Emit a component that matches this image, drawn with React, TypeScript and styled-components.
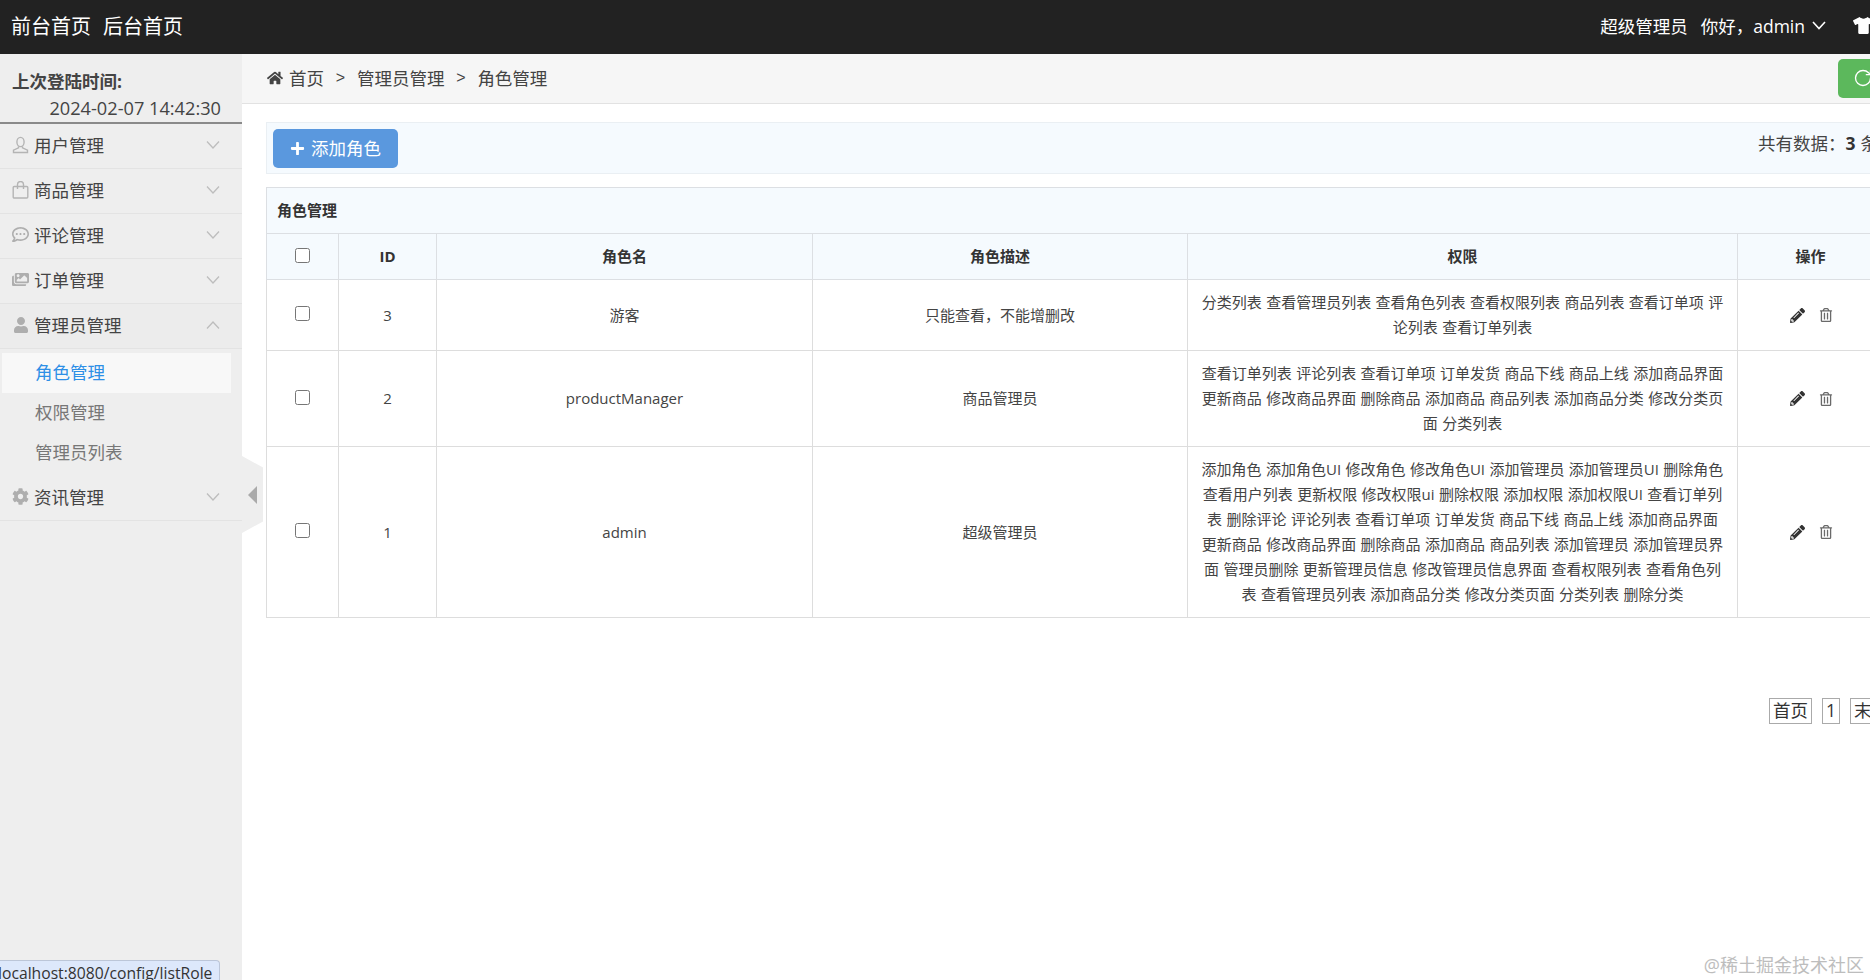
import React from "react";
import styled, { createGlobalStyle } from "styled-components";
import { RotateCw } from "lucide-react";
import { FaCog, FaHome, FaImages, FaPencilAlt, FaPlus, FaRegCommentDots, FaRegTrashAlt, FaTshirt, FaUser } from "react-icons/fa";

const FONT = `"Open Sans", "Noto Sans CJK SC", sans-serif`;

const Global = createGlobalStyle`
  html, body { margin: 0; padding: 0; width: 1870px; height: 980px; overflow: hidden; background: #fff; }
  body { font-family: ${FONT}; color: #333; }
  #root { width: 1870px; height: 980px; overflow: hidden; position: relative; }
`;

const Page = styled.div`
  width: 1907px;
  height: 980px;
  display: flex;
  flex-direction: column;
`;

const TopBar = styled.header`
  height: 54px;
  box-sizing: border-box;
  flex: none;
  background: #222;
  color: #fff;
  display: flex;
  align-items: center;
  padding: 0 0 3px 11px;
`;

const TopLink = styled.a`
  font-size: 20px;
  margin-right: 12px;
  color: #fff;
`;

const TopRight = styled.div`
  margin-left: auto;
  display: flex;
  align-items: center;
  font-size: 17.5px;
  padding-right: 33px;
`;

const Role = styled.span`
  margin-right: 13px;
`;

const Caret = styled.svg`
  width: 14px;
  height: 9px;
  margin-left: 7px;
  margin-right: 27px;
  fill: none;
  stroke: #fff;
  stroke-width: 1.6;
`;

const Body = styled.div`
  flex: 1;
  display: flex;
  min-height: 0;
`;

const Aside = styled.aside`
  width: 242px;
  flex: none;
  background: #eee;
  position: relative;
`;

const LoginInfo = styled.div`
  height: 70px;
  box-sizing: border-box;
  border-bottom: 2px solid #8a8a8a;
  font-size: 17.5px;
  padding: 14px 21px 0 12px;
`;

const LoginLabel = styled.div`
  font-weight: 700;
  line-height: 27px;
  color: #444;
`;

const LoginTime = styled.div`
  text-align: right;
  line-height: 26px;
  font-size: 18.2px;
  color: #444;
`;

const MenuRow = styled.div<{ $open?: boolean }>`
  height: 45px;
  box-sizing: border-box;
  border-bottom: 1px solid #e3e3e3;
  display: flex;
  align-items: center;
  padding: 0 22px 3px 12px;
  font-size: 17.5px;
  color: #444;
  background: ${(p) => (p.$open ? "#ececec" : "transparent")};
`;

const MenuIcon = styled.span`
  width: 17px;
  height: 18px;
  margin-right: 5px;
  color: #aeaeae;
  display: flex;
  align-items: center;
  justify-content: center;
  flex: none;
`;

const OutlineIcon = styled.svg`
  width: 17px;
  height: 18px;
  fill: none;
  stroke: #b4b4b4;
  stroke-width: 1.4;
`;

const Arrow = styled.svg`
  margin-left: auto;
  width: 14px;
  height: 8px;
  fill: none;
  stroke: #bdbdbd;
  stroke-width: 1.3;
`;

const SubMenu = styled.div`
  padding: 4px 0 3px;
`;

const SubItem = styled.div<{ $active?: boolean }>`
  height: 40px;
  width: 229px;
  margin-left: 2px;
  box-sizing: border-box;
  padding: 0 0 3px 33px;
  display: flex;
  align-items: center;
  font-size: 17.5px;
  color: ${(p) => (p.$active ? "#2e8fe6" : "#777")};
  background: ${(p) => (p.$active ? "#f8f8f8" : "transparent")};
`;

const Handle = styled.div`
  position: absolute;
  left: 242px;
  top: 402px;
  width: 21px;
  height: 77px;
  background: #eee;
  clip-path: polygon(0 0, 100% 15%, 100% 85%, 0 100%);
  display: flex;
  align-items: center;
  padding-left: 6px;
  box-sizing: border-box;
  &::before {
    content: "";
    border-style: solid;
    border-width: 9.5px 9px 9.5px 0;
    border-color: transparent #aaa transparent transparent;
  }
`;

const StatusBar = styled.div`
  position: absolute;
  left: -1px;
  bottom: 0;
  width: 221px;
  height: 20px;
  box-sizing: border-box;
  background: #dde8fb;
  border: 1px solid #bcc6d8;
  border-bottom: none;
  border-top-right-radius: 4px;
  font-size: 15.7px;
  line-height: 24px;
  color: #333;
  white-space: nowrap;
  overflow: hidden;
  text-indent: -2px;
`;

const Main = styled.main`
  flex: 1;
  min-width: 0;
`;

const Crumbs = styled.nav`
  height: 50px;
  box-sizing: border-box;
  background: #f6f6f6;
  border-bottom: 1px solid #e2e2e2;
  display: flex;
  align-items: center;
  padding: 0 0 3px 25px;
  font-size: 17.5px;
  color: #444;
`;

const Sep = styled.span`
  margin: 2px 11.8px 0;
  font-family: "Liberation Sans", sans-serif;
  font-size: 16px;
`;

const HomeIcon = styled(FaHome)`
  margin: 2px 6px 0 0;
  font-size: 16px;
`;

const RefreshBtn = styled.button`
  margin: 2px 20px 0 auto;
  width: 49px;
  height: 39px;
  border: none;
  border-radius: 5px;
  background: #5cb85c;
  color: #fff;
  display: flex;
  align-items: center;
  justify-content: center;
  padding: 0;
`;

const Content = styled.div`
  padding: 18px 0 0 24px;
  width: 1627px;
`;

const Toolbar = styled.div`
  width: 1617px;
  height: 52px;
  box-sizing: border-box;
  background: #f5fafe;
  border: 1px solid #eaeff3;
  display: flex;
  align-items: center;
  justify-content: space-between;
  padding: 0 4px 0 6px;
`;

const AddBtn = styled.button`
  width: 125px;
  height: 39px;
  background: #5a98de;
  color: #fff;
  border: none;
  border-radius: 5px;
  font: 17.5px ${FONT};
  display: flex;
  align-items: center;
  justify-content: center;
  gap: 6px;
  padding: 0 0 2px;
`;

const PlusIcon = styled(FaPlus)`
  font-size: 15px;
  margin-top: 2px;
`;

const Count = styled.div`
  font-size: 17.5px;
  color: #444;
  margin-top: -12px;
  strong { margin: 0 5px 0 0; color: #333; }
`;

const Table = styled.table`
  width: 1617px;
  margin-top: 13px;
  border-collapse: collapse;
  table-layout: fixed;
  font-size: 15px;
`;

const CaptionCell = styled.th`
  height: 46px;
  box-sizing: border-box;
  padding: 0 0 2px 10px;
  text-align: left;
  font-weight: 700;
  background: #f5fafe;
  border: 1px solid #dcdfe3;
`;

const HeadCell = styled.th`
  height: 46px;
  box-sizing: border-box;
  padding: 0 0 2px;
  text-align: center;
  font-weight: 700;
  background: #f5fafe;
  border: 1px solid #dcdfe3;
`;

const Cell = styled.td`
  padding: 0;
  text-align: center;
  vertical-align: middle;
  border: 1px solid #ddd;
  color: #444;
  line-height: 25px;
`;

const Perms = styled(Cell)`
  white-space: nowrap;
  word-spacing: 0.5px;
`;

const Check = styled.input<{ $head?: boolean }>`
  width: 15px;
  height: 15px;
  margin: 0 0 ${(p) => (p.$head ? 3 : 5)}px;
  vertical-align: middle;
  display: inline-block;
`;

const Ops = styled.div`
  display: flex;
  align-items: center;
  justify-content: center;
  gap: 14px;
  color: #333;
  padding-left: 1px;
`;

const TrashIcon = styled(FaRegTrashAlt)`
  color: #6a6a6a;
  font-size: 14px;
`;

const Pager = styled.div`
  display: flex;
  justify-content: flex-end;
  gap: 10px;
  margin-top: 80px;
`;

const PageBtn = styled.a`
  height: 26px;
  box-sizing: border-box;
  border: 1px solid #aaa;
  padding: 0 3px;
  font-size: 17.5px;
  line-height: 22px;
  color: #333;
`;

const Watermark = styled.div`
  position: absolute;
  right: 6px;
  bottom: 3px;
  font-size: 18px;
  line-height: 24px;
  color: #bdbdbd;
`;

const widths = [72, 98, 376, 375, 550, 146];

const UserOutline = () => (
  <OutlineIcon viewBox="0 0 17 18">
    <ellipse cx="8.5" cy="6" rx="3.6" ry="4.6" />
    <path d="M6.5 10.5v1.3L1.5 14.2v2.3h14v-2.3l-5-2.4v-1.3" />
  </OutlineIcon>
);

const BagOutline = () => (
  <OutlineIcon viewBox="0 0 17 18">
    <rect x="1.2" y="5.5" width="14.6" height="11.5" rx="1" />
    <path d="M5.5 8V3.5a3 3 0 0 1 6 0V8" />
  </OutlineIcon>
);

const menus = [
  { icon: <UserOutline />, label: "用户管理" },
  { icon: <BagOutline />, label: "商品管理" },
  { icon: <FaRegCommentDots size={17} />, label: "评论管理" },
  { icon: <FaImages size={19} />, label: "订单管理" },
];

const rows = [
  {
    id: 3, name: "游客", desc: "只能查看，不能增删改", h: 71,
    perms: ["分类列表 查看管理员列表 查看角色列表 查看权限列表 商品列表 查看订单项 评", "论列表 查看订单列表"],
  },
  {
    id: 2, name: "productManager", desc: "商品管理员", h: 96,
    perms: ["查看订单列表 评论列表 查看订单项 订单发货 商品下线 商品上线 添加商品界面", "更新商品 修改商品界面 删除商品 添加商品 商品列表 添加商品分类 修改分类页", "面 分类列表"],
  },
  {
    id: 1, name: "admin", desc: "超级管理员", h: 171,
    perms: [
      "添加角色 添加角色UI 修改角色 修改角色UI 添加管理员 添加管理员UI 删除角色",
      "查看用户列表 更新权限 修改权限ui 删除权限 添加权限 添加权限UI 查看订单列",
      "表 删除评论 评论列表 查看订单项 订单发货 商品下线 商品上线 添加商品界面",
      "更新商品 修改商品界面 删除商品 添加商品 商品列表 添加管理员 添加管理员界",
      "面 管理员删除 更新管理员信息 修改管理员信息界面 查看权限列表 查看角色列",
      "表 查看管理员列表 添加商品分类 修改分类页面 分类列表 删除分类",
    ],
  },
];

const Chevron = ({ up }: { up?: boolean }) => (
  <Arrow viewBox="0 0 14 8">
    <polyline points={up ? "1,7.5 7,1 13,7.5" : "1,0.5 7,7 13,0.5"} />
  </Arrow>
);

export default function App() {
  return (
    <Page>
      <Global />
      <TopBar>
        <TopLink>前台首页</TopLink>
        <TopLink>后台首页</TopLink>
        <TopRight>
          <Role>超级管理员</Role>
          <span>你好，admin</span>
          <Caret viewBox="0 0 14 9"><polyline points="1,1 7,7.5 13,1" /></Caret>
          <FaTshirt size={21} />
        </TopRight>
      </TopBar>
      <Body>
        <Aside>
          <LoginInfo>
            <LoginLabel>上次登陆时间:</LoginLabel>
            <LoginTime>2024-02-07 14:42:30</LoginTime>
          </LoginInfo>
          {menus.map((m) => (
            <MenuRow key={m.label}>
              <MenuIcon>{m.icon}</MenuIcon>
              {m.label}
              <Chevron />
            </MenuRow>
          ))}
          <MenuRow $open>
            <MenuIcon><FaUser size={16} /></MenuIcon>
            管理员管理
            <Chevron up />
          </MenuRow>
          <SubMenu>
            <SubItem $active>角色管理</SubItem>
            <SubItem>权限管理</SubItem>
            <SubItem>管理员列表</SubItem>
          </SubMenu>
          <MenuRow>
            <MenuIcon><FaCog size={17} /></MenuIcon>
            资讯管理
            <Chevron />
          </MenuRow>
          <Handle />
          <StatusBar>localhost:8080/config/listRole</StatusBar>
        </Aside>
        <Main>
          <Crumbs>
            <HomeIcon />
            首页<Sep>&gt;</Sep>管理员管理<Sep>&gt;</Sep>角色管理
            <RefreshBtn aria-label="刷新"><RotateCw size={20} strokeWidth={1.6} /></RefreshBtn>
          </Crumbs>
          <Content>
            <Toolbar>
              <AddBtn><PlusIcon />添加角色</AddBtn>
              <Count>共有数据：<strong>3</strong>条</Count>
            </Toolbar>
            <Table>
              <colgroup>
                {widths.map((w, i) => <col key={i} style={{ width: w }} />)}
              </colgroup>
              <thead>
                <tr><CaptionCell colSpan={6}>角色管理</CaptionCell></tr>
                <tr>
                  <HeadCell><Check type="checkbox" $head /></HeadCell>
                  <HeadCell>ID</HeadCell>
                  <HeadCell>角色名</HeadCell>
                  <HeadCell>角色描述</HeadCell>
                  <HeadCell>权限</HeadCell>
                  <HeadCell>操作</HeadCell>
                </tr>
              </thead>
              <tbody>
                {rows.map((r) => (
                  <tr key={r.id} style={{ height: r.h }}>
                    <Cell><Check type="checkbox" /></Cell>
                    <Cell>{r.id}</Cell>
                    <Cell>{r.name}</Cell>
                    <Cell>{r.desc}</Cell>
                    <Perms>
                      {r.perms.map((l, i) => <div key={i}>{l}</div>)}
                    </Perms>
                    <Cell>
                      <Ops><FaPencilAlt size={15} /><TrashIcon /></Ops>
                    </Cell>
                  </tr>
                ))}
              </tbody>
            </Table>
            <Pager>
              <PageBtn>首页</PageBtn>
              <PageBtn>1</PageBtn>
              <PageBtn>末页</PageBtn>
            </Pager>
          </Content>
        </Main>
      </Body>
      <Watermark>@稀土掘金技术社区</Watermark>
    </Page>
  );
}
